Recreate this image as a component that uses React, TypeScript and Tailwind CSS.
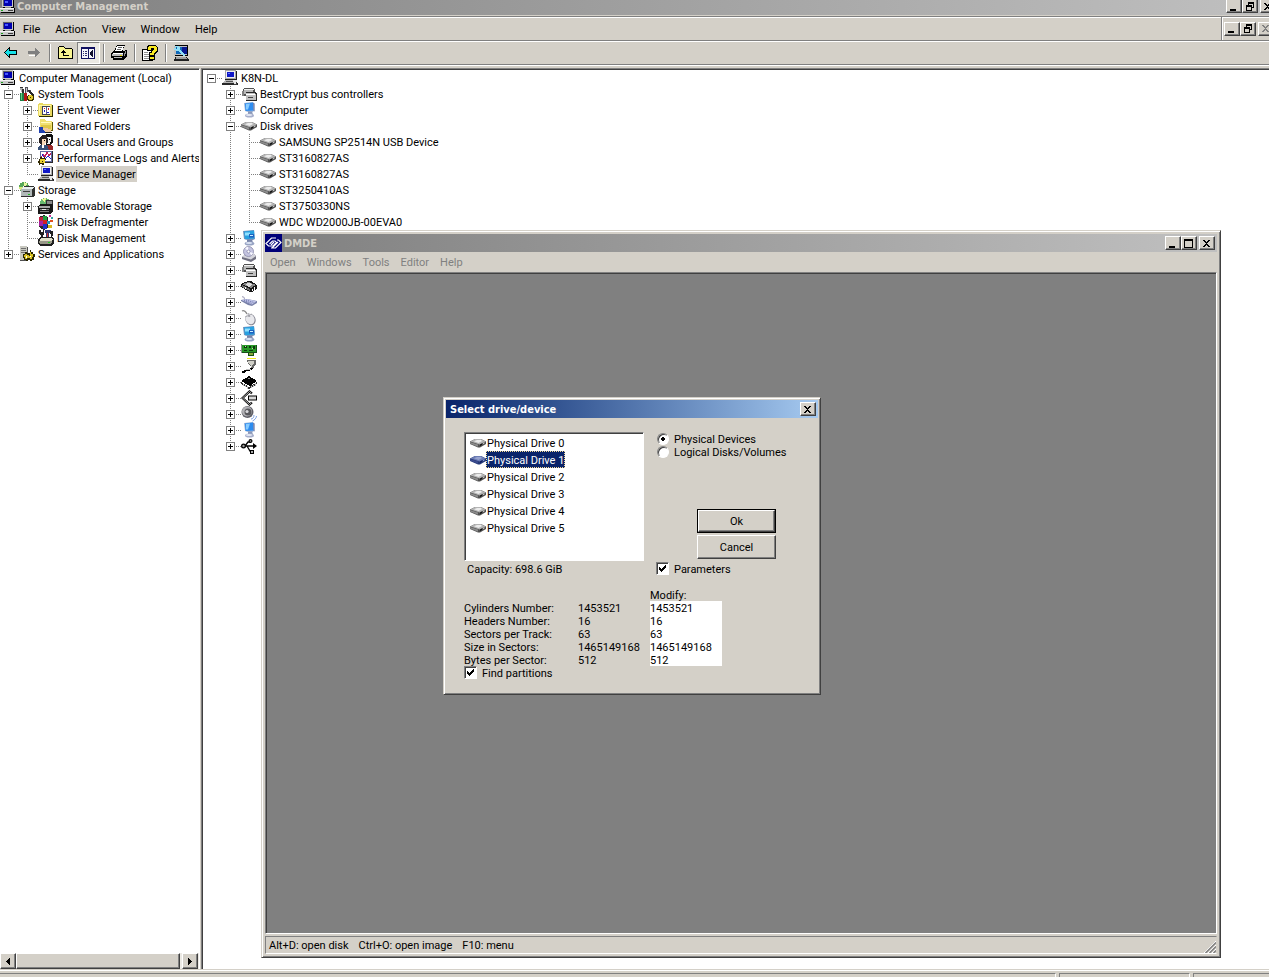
import type { ReactNode } from "react";
import clsx from "clsx";

const raised =
  "border border-t-white border-l-white border-r-[#404040] border-b-[#404040] bg-[#d4d0c8] shadow-[inset_-1px_-1px_0_#808080]";
const sunken =
  "border border-t-[#808080] border-l-[#808080] border-r-white border-b-white shadow-[inset_1px_1px_0_#404040]";
const frame =
  "border border-t-[#d4d0c8] border-l-[#d4d0c8] border-r-[#404040] border-b-[#404040] bg-[#d4d0c8] shadow-[inset_1px_1px_0_#fff,inset_-1px_-1px_0_#808080]";
const titleFont = "font-['Tahoma','DejaVu_Sans_Condensed','DejaVu_Sans',sans-serif] font-bold";
// text inside the 13px rows of the drive dialog
const compact = "pt-0.5 leading-[11px]";

/* ---------- icons ---------- */

function Icon({ children, smooth }: { children: ReactNode; smooth?: boolean }) {
  return (
    <svg
      width="16"
      height="16"
      viewBox="0 0 16 16"
      className="block shrink-0"
      shapeRendering={smooth ? "auto" : "crispEdges"}
      aria-hidden="true"
    >
      {children}
    </svg>
  );
}

const PcIcon = () => (
  <Icon>
    <path d="M3 0h10v1h1v9H3z" fill="#000" />
    <path d="M2 0h11v9H2z" fill="#c8c8c8" />
    <path d="M3 1h9v7H3z" fill="#606068" />
    <path d="M4 2h8v6H4z" fill="#0000b0" />
    <path d="M5 3h3v2H5z" fill="#4858ff" />
    <path d="M5 9h6v2H5z" fill="#909090" />
    <path d="M1 10h14v5H1z" fill="#000" />
    <path d="M0 10h14v4H0z" fill="#c8c8c8" />
    <path d="M0 10h14v1H0z" fill="#f4f4f4" />
    <path d="M8 12h5v1H8z" fill="#404040" />
    <path d="M1 12h2v1H1z" fill="#20a020" />
  </Icon>
);

const ToolsIcon = () => (
  <Icon>
    <path d="M1 2h3l1 2v2H2z" fill="#b0b0b0" />
    <path d="M1 1h3v1H1zM3 3h2v4H3z" fill="#303030" />
    <path d="M6 1h3v3h3v2H8v6H6z" fill="#505058" />
    <path d="M7 2h1v8H7z" fill="#c8c8d0" />
    <path d="M1 7h4v8H1z" fill="#208048" />
    <path d="M2 7h1v7H2z" fill="#60d080" />
    <path d="M5 7h3v8H5z" fill="#b01818" />
    <path d="M9 4h2l4 5v2h-2z" fill="#282828" />
    <path d="M9 9h5v1h1v4h-1v1H9v-1H8v-4h1z" fill="#383000" />
    <path d="M10 9h3v1h1v3h-1v1h-3v-1H9v-3h1z" fill="#e0c830" />
    <path d="M11 11h1v1h-1z" fill="#383000" />
  </Icon>
);

const EventIcon = () => (
  <Icon>
    <path d="M1 2h4l1 1h9v12H1z" fill="#303000" />
    <path d="M0 2h1V1h4v1h9v12H0z" fill="#e8d860" />
    <path d="M1 3h12v1H1zM1 3h1v10H1z" fill="#fff8a8" />
    <path d="M4 4h8v9H4z" fill="#404058" />
    <path d="M5 5h7v7H5z" fill="#fff" />
    <path d="M8 5h1v7H8z" fill="#606080" />
    <path d="M6 6h1v1H6zM10 6h1v2h-1z" fill="#d02020" />
    <path d="M6 8h1v2H6zM9 10h2v1H9z" fill="#2020c0" />
  </Icon>
);

const SharedIcon = () => (
  <Icon>
    <path d="M3 2h5l1 2h6v9H3z" fill="#605800" />
    <path d="M2 1h5l1 2h6v9H2z" fill="#f0e070" />
    <path d="M3 4h10v1H3z" fill="#fffbc0" />
    <path d="M3 7h10v4H3z" fill="#e0c848" />
    <path d="M1 9h4v3h5v3H1z" fill="#2040b0" />
    <path d="M5 10h4l4 2v2H7z" fill="#f0c8a0" />
    <path d="M7 14h7v1H7z" fill="#202020" />
  </Icon>
);

const UsersIcon = () => (
  <Icon>
    <path d="M8 0h5l2 2v6l-2 3-5 1z" fill="#101010" />
    <path d="M9 3h4v5h-1v2H9z" fill="#f0f0f0" />
    <path d="M2 3l2-2h4l2 4v4H7v3H4L1 9V5z" fill="#282020" />
    <path d="M4 5h4v4H7v2H4z" fill="#f8d8b8" />
    <path d="M6 6h1v1H6zM11 5h1v1h-1z" fill="#000" />
    <path d="M0 13l3-2h5l3 3v2H0z" fill="#385078" />
    <path d="M9 11h4l2 2v3h-4z" fill="#982828" />
    <path d="M4 11h2v3H4z" fill="#fff" />
  </Icon>
);

const PerfIcon = () => (
  <Icon>
    <path d="M3 1h12v12H3z" fill="#282828" />
    <path d="M2 1h12v11H2z" fill="#6068a0" />
    <path d="M3 2h10v9H3z" fill="#fff" />
    <path d="M3 8l2-4 2 3 2-5 2 4 2-3" fill="none" stroke="#c02060" />
    <path d="M4 4l3 5 3-3 3 3" fill="none" stroke="#2020d0" />
    <path d="M2 7h2v1h2V7h1v2h1v1H7v2h1v1H6v2H4v-1H2v1H1v-2H0v-2h1V9h1z" fill="#302800" />
    <path d="M2 9h5v4H2z" fill="#e8d030" />
    <path d="M4 11h1v1H4z" fill="#302800" />
  </Icon>
);

const DevMgrIcon = () => (
  <Icon>
    <path d="M3 0h11v1h1v9H3z" fill="#202020" />
    <path d="M3 0h11v9H3z" fill="#a8a8a8" />
    <path d="M4 1h9v7H4z" fill="#f0f0f0" />
    <path d="M5 2h7v5H5z" fill="#1018c8" />
    <path d="M6 3h2v1H6z" fill="#6070ff" />
    <path d="M3 10h10l3 4v1H0v-1z" fill="#282828" />
    <path d="M3 10h9l2 3H1z" fill="#b8b8b8" />
    <path d="M4 11h7v1H4z" fill="#585858" />
    <path d="M11 10h4v4h-3z" fill="#e8e8e8" />
    <path d="M14 12h1v3h-3v-1h2z" fill="#404040" />
  </Icon>
);

const StorageIcon = () => (
  <Icon>
    <circle cx="5" cy="5" r="5" fill="#58a858" />
    <path d="M5 5V0l4 2z" fill="#e8f8a0" />
    <path d="M5 5H0l1 3z" fill="#d8e880" />
    <circle cx="5" cy="5" r="1" fill="#fff" />
    <path d="M2 7l3-3h10l1 2v8l-2 1H2z" fill="#303030" />
    <path d="M2 7h11v7H2z" fill="#b0b8b8" />
    <path d="M2 7l3-2h10l-2 2z" fill="#e8f0f0" />
    <path d="M4 9h7v1H4z" fill="#404040" />
    <path d="M9 12h2v1H9z" fill="#20c020" />
  </Icon>
);

const RemovableIcon = () => (
  <Icon>
    <circle cx="7" cy="5" r="5" fill="#68b870" />
    <path d="M7 5l-3-4 4-1zM7 5l5 2V4z" fill="#f0f890" />
    <path d="M8 2h7v5H8z" fill="#303030" />
    <path d="M9 3h5v3H9z" fill="#888" />
    <path d="M0 8l3-2h12v7l-2 3H0z" fill="#181818" />
    <path d="M1 8h11v2H1z" fill="#a8a8a8" />
    <path d="M2 11h9v1H2zM2 13h9v1H2z" fill="#808080" />
    <path d="M4 11h4v1H4z" fill="#e8e8e8" />
  </Icon>
);

const DefragIcon = () => (
  <Icon>
    <path d="M1 3l5-2 4 2v11l-4 2-5-3z" fill="#282828" />
    <path d="M1 3h4v4H1z" fill="#c02040" />
    <path d="M5 2h4v4H5z" fill="#20a040" />
    <path d="M1 7h4v5H1z" fill="#a820a0" />
    <path d="M5 6h4v4H5z" fill="#d02020" />
    <path d="M5 10h4v5H5z" fill="#2030c8" />
    <path d="M9 7h3v3H9z" fill="#2090c0" />
    <path d="M10 11h4v3h-4z" fill="#d8b820" />
    <path d="M11 1h2v2h-2z" fill="#d030a0" />
    <path d="M13 3h2v2h-2z" fill="#30a0a0" />
    <path d="M12 6h3v2h-3z" fill="#e05020" />
  </Icon>
);

const DiskMgmtIcon = () => (
  <Icon>
    <path d="M1 0h2v2h2V0h1v4L5 5v4H3V5L1 4z" fill="#202020" />
    <path d="M7 0h6v3h-2v6H8V3H7z" fill="#303870" />
    <path d="M12 1h3v4l-1 1v3h-1V6z" fill="#202020" />
    <path d="M9 3h1v5H9z" fill="#d03020" />
    <path d="M0 9l3-2h11l2 2v5l-3 2H3l-3-2z" fill="#202020" />
    <path d="M1 10l3-2h9l2 2-2 1H3z" fill="#e0e0c8" />
    <path d="M1 11h13v2l-2 1H3l-2-1z" fill="#989888" />
    <path d="M10 12h2v1h-2z" fill="#20d020" />
  </Icon>
);

const ServicesIcon = () => (
  <Icon>
    <path d="M1 1h7l1 1v13H1z" fill="#505050" />
    <path d="M1 0h7v14H1z" fill="#c8c8c0" />
    <path d="M2 2h5v1H2zM2 4h5v1H2zM2 6h5v1H2z" fill="#707070" />
    <path d="M4 8h2V6h2v1h3V4h1v2h2v2h2v3h-1v3h-2v1h-2v-1H9v1H7v-1H5v-2H4z" fill="#282400" />
    <path d="M6 8h2v1h2v1h1V6h1v2h2v3h-1v2h-2v-1H8v1H6v-2H5V9z" fill="#d8c020" />
    <path d="M7 10h1v2H7zM11 10h1v1h-1z" fill="#fff" />
  </Icon>
);

const ControllerIcon = () => (
  <Icon>
    <path d="M3 2h9l2 2v6H2V3z" fill="#505050" />
    <path d="M3 3h9l1 1H3z" fill="#f0f0f0" />
    <path d="M3 4h9v4H3z" fill="#b8b8b8" />
    <path d="M5 6h10l1 2v6l-1 1H5z" fill="#282828" />
    <path d="M1 5h2v5H1z" fill="#808080" />
    <path d="M5 7h9l1 2v4l-1 1H5V9z" fill="#c0c0c0" />
    <path d="M5 8h9v1H5z" fill="#fff" />
    <path d="M7 11h5v1H7z" fill="#404040" />
  </Icon>
);

const MonitorIcon = () => (
  <Icon smooth>
    <path d="M3 1l9-1 1 9-3 2-6-2z" fill="#9cb4d8" />
    <path d="M4 1.500l8-1 .6 8-8 .5z" fill="#2c8cf0" />
    <path d="M5 2l4-.5-2 6H5z" fill="#88ccff" />
    <path d="M12 .4l1.600 1v8L12.600 9z" fill="#6878a8" />
    <path d="M7 9.500h4l1 3H7z" fill="#8c98b8" />
    <ellipse cx="8.500" cy="13.500" rx="4.500" ry="2" fill="#a8b0cc" />
    <ellipse cx="8" cy="13" rx="3.200" ry="1" fill="#e4e8f4" />
  </Icon>
);

const DisplayIcon = () => (
  <Icon smooth>
    <path d="M2 1l11-1 1 9-4 2-7-2z" fill="#7890b8" />
    <path d="M3 1.500l10-1 .5 8-9.500.7z" fill="#28a0e0" />
    <path d="M4 2.500h5v3H4z" fill="#90e0ff" />
    <path d="M8 4h5v3.500H8z" fill="#1c60c0" />
    <path d="M9 5h3v1H9z" fill="#c8f0ff" />
    <path d="M6 10h5l1 2.500H6z" fill="#7884a8" />
    <ellipse cx="8.500" cy="13.500" rx="4.800" ry="2" fill="#98a4c4" />
    <ellipse cx="8" cy="13" rx="3.200" ry="1" fill="#dce4f4" />
  </Icon>
);

function DiskIcon({ selected }: { selected?: boolean }) {
  return (
    <Icon smooth>
      <path d="M0 6.500L5 4h6l5 2.500V9l-6 3.500H8L0 9z" fill={selected ? "#263a78" : "#505050"} />
      <path d="M.5 6.500L5 4h6l4.500 2.500L9.500 9.500z" fill={selected ? "#6c7cb4" : "#b4b4b4"} />
      <path d="M4 6.300L7 5h4l1 1-3.500 2z" fill={selected ? "#98a4d0" : "#ececec"} />
      <path d="M0 7L8 9.500v2.300L0 8.500z" fill={selected ? "#3c4c90" : "#8c8c8c"} />
      <path d="M10 9.500l2-1V10l-2 1z" fill={selected ? "#0a1860" : "#101010"} />
      <path d="M13 8l1.500-.8v1L13 9z" fill={selected ? "#a8b8f0" : "#e8e8e8"} />
    </Icon>
  );
}

const DvdIcon = () => (
  <Icon smooth>
    <path d="M1 11l4-3h8l2 2v3l-5 3L1 13z" fill="#707080" />
    <path d="M1 11l4-3h8l2 2-5 3.500z" fill="#d4d4dc" />
    <circle cx="7.500" cy="5.500" r="5" fill="#c4c4e0" stroke="#8888a8" strokeWidth=".8" />
    <path d="M7.500 5.500L4 2l3-1.300zM7.500 5.500l4.600 1.500-1.500 2.500z" fill="#f8f8ff" />
    <circle cx="7.500" cy="5.500" r="1.500" fill="#fff" stroke="#7878a0" strokeWidth=".7" />
  </Icon>
);

const IdeIcon = () => (
  <Icon>
    <path d="M0 6l7-3h3l6 4v4l-5 3H9l-9-5z" fill="#181818" />
    <path d="M1 6l7-2 7 3-5 3z" fill="#888" />
    <path d="M4 6l4-1 4 1-4 3z" fill="#e0e0e0" />
    <path d="M1 7l8 4v2L1 9z" fill="#707070" />
    <path d="M11 11h1v2h-1zM13 9h1v3h-1zM4 9h1v2H4z" fill="#fff" />
  </Icon>
);

const KeyboardIcon = () => (
  <Icon smooth>
    <path d="M1 3c2-1 2 1 3 3" fill="none" stroke="#8888a8" />
    <path d="M0 6l6-1 10 2v2l-5 3-4-1-7-4z" fill="#7880a8" />
    <path d="M.5 6L6 5l9.500 2-4.500 3.500z" fill="#c0c4e8" />
    <path d="M3 6.500l8 3M5 6l8 2.500" stroke="#6870a8" strokeDasharray="1 1" />
  </Icon>
);

const MouseIcon = () => (
  <Icon smooth>
    <path d="M1 1c2-1 4 1 5 3" fill="none" stroke="#888" strokeWidth="1.300" />
    <ellipse cx="9.500" cy="9.500" rx="5" ry="6" transform="rotate(-25 9.500 9.500)" fill="#888894" />
    <ellipse cx="9" cy="9" rx="4.400" ry="5.400" transform="rotate(-25 9 9)" fill="#e8e8ec" />
    <path d="M4 7c2-1 5-2 7-3M7 3l2 4" fill="none" stroke="#9898a0" strokeWidth=".8" />
    <circle cx="8" cy="6" r="1" fill="#a0a0a8" />
  </Icon>
);

const NetworkCardIcon = () => (
  <Icon>
    <path d="M0 3h16v8h-3v3H7v-3H0z" fill="#185018" />
    <path d="M1 3h14v7H1z" fill="#289828" />
    <path d="M3 4h3v2H3zM8 4h2v2H8zM12 4h2v3h-2zM3 8h3v1H3zM8 8h4v1H8z" fill="#0c380c" />
    <path d="M4 4h1v1H4zM11 6h1v1h-1z" fill="#b8e8a0" />
    <path d="M8 11h4v2H8z" fill="#88a838" />
    <path d="M0 2h1v9H0z" fill="#909090" />
  </Icon>
);

const PortIcon = () => (
  <Icon>
    <path d="M6 0h9v1H6z" fill="#f0e820" />
    <path d="M6 2h9v4l-2 2v2h-3V8L7 6z" fill="#686868" />
    <path d="M7 3h6v3l-2 1v2h-1V7L7 5z" fill="#d0d0c8" />
    <path d="M11 10c-1 3-3 1-5 2s-3 3-5 2" fill="none" stroke="#000" strokeWidth="2" />
    <path d="M10 11c-1 1-3 0-5 1" fill="none" stroke="#c0c0c0" />
  </Icon>
);

const ChipIcon = () => (
  <Icon>
    <path d="M0 7l8-5 8 5-7 5z" fill="#000" />
    <path d="M0 8l8 5 8-5v2l-8 5-8-5z" fill="#303030" />
    <path d="M2 10h1v2H2zM4 11h1v2H4zM6 12h1v3H6zM10 12h1v2h-1zM12 11h1v2h-1zM14 9h1v3h-1z" fill="#c8c8c8" />
    <path d="M7 4h2v1H7z" fill="#909090" />
  </Icon>
);

const ScsiIcon = () => (
  <Icon smooth>
    <path d="M11 3.500L8.500 1.500 1.500 8l7 6.500 2.500-2" fill="none" stroke="#000" strokeWidth="2.200" />
    <path d="M10.500 3.200l-2-1.700L1.500 8l7 6.500 2-1.700" fill="none" stroke="#d0d0d0" strokeWidth=".8" />
    <path d="M7 5.500h9v5H7z" fill="#000" />
    <path d="M8 6.500h7v3H8z" fill="#d8d8d8" />
  </Icon>
);

const SoundIcon = () => (
  <Icon smooth>
    <circle cx="6.500" cy="6" r="6" fill="#606068" />
    <circle cx="6" cy="5.500" r="5" fill="#b0b0b4" />
    <circle cx="7" cy="6" r="3.500" fill="#58585c" />
    <circle cx="6" cy="5.500" r="1.600" fill="#d8d8dc" />
    <path d="M10 13c2 0 3-2 3-4M11.500 15c2-1 4-3 4-5" fill="none" stroke="#7098e0" strokeWidth=".9" />
  </Icon>
);

const UsbIcon = () => (
  <Icon smooth>
    <path d="M1 8h13M4 8l3-4h3M6 8l3 5h2" fill="none" stroke="#000" strokeWidth="1.300" />
    <circle cx="2.500" cy="8" r="2.500" fill="#000" />
    <circle cx="2.500" cy="8" r="1.200" fill="#a0a0a0" />
    <path d="M12 5l4 3-4 3z" fill="#000" />
    <circle cx="9.500" cy="3" r="2" fill="#000" />
    <circle cx="9.500" cy="3" r=".8" fill="#aaa" />
    <path d="M9 12h4v4H9z" fill="#000" />
    <path d="M10 13h2v2h-2z" fill="#aaa" />
  </Icon>
);

const BackIcon = () => (
  <Icon>
    <path d="M7 2v3h7v5H7v3H6v-1H5v-1H4v-1H3V9H2V8H1V7h1V6h1V5h1V4h1V3h1V2z" fill="#000" />
    <path d="M6 4v2h7v3H6v2H5v-1H4V9H3V8H2V7h1V6h1V5h1V4z" fill="#18e0e8" />
  </Icon>
);

const ForwardIcon = () => (
  <Icon>
    <path d="M9 3h1v1h1v1h1v1h1v1h1v1h-1v1h-1v1h-1v1h-1v1H9v-3H2V6h7z" fill="#808080" />
    <path d="M3 10h6v1H3z" fill="#fff" />
  </Icon>
);

const UpFolderIcon = () => (
  <Icon>
    <path d="M2 1h5v1h1v1h7v1h1v10H1V2h1z" fill="#000" />
    <path d="M2 2h5v1h1v1h7v9H2z" fill="#f8f490" />
    <path d="M6 5h1v1h1v1h1v1H7v2h5v1H6V8H4V7h1V6h1z" fill="#000" />
  </Icon>
);

const TreePaneIcon = () => (
  <Icon>
    <path d="M1 2h14v12H1z" fill="#101060" />
    <path d="M2 4h6v9H2zM9 4h5v9H9z" fill="#f4f4fc" />
    <path d="M3 6h1v1H3zM5 6h2v1H5zM3 8h1v1H3zM5 8h2v1H5zM3 10h1v1H3zM5 10h2v1H5z" fill="#303070" />
    <path d="M13 5v7h-1v-1h-1v-1h-1V7h1V6h1V5z" fill="#101030" />
  </Icon>
);

const PrinterIcon = () => (
  <Icon>
    <path d="M6 0h8v1h-1v2h-1v3H3V5h1V3h1V1h1z" fill="#000" />
    <path d="M6 1h7l-2 5H4z" fill="#fff" />
    <path d="M7 2h4v1H7zM6 4h4v1H6z" fill="#606060" />
    <path d="M2 6h11l2-2v1l1 1v5l-2 2v1l-2 1H2v-2H0V8h1V7h1z" fill="#000" />
    <path d="M2 8h10v1H2z" fill="#fff" />
    <path d="M1 9h11v2H1zM3 12h8v1H3z" fill="#b8b8b8" />
    <path d="M9 10h2v1H9z" fill="#e8d800" />
    <path d="M13 8h1v3h-1zM14 6h1v3h-1z" fill="#909090" />
  </Icon>
);

const HelpIcon = () => (
  <Icon>
    <path d="M0 4h11v12H0z" fill="#000" />
    <path d="M1 5h9v10H1z" fill="#fff" />
    <path d="M2 7h4v1H2zM2 9h5v1H2zM2 11h5v1H2zM2 13h5v1H2z" fill="#909090" />
    <path d="M6 0h8v1h1v1h1v5h-1v1h-1v1h-1v2H7V7h2V6H5V1h1z" fill="#000" />
    <path d="M7 1h7v1h1v4h-1v1h-1v1h-1v2H8V8h2V6h1V5h1V3H9v2H6V2h1z" fill="#f8e820" />
    <path d="M7 11h6v4H7z" fill="#000" />
    <path d="M8 12h4v2H8z" fill="#f8e820" />
  </Icon>
);

const ScanIcon = () => (
  <Icon>
    <path d="M2 0h13v11H2z" fill="#000" />
    <path d="M1 1h13v9H1z" fill="#c0c0c0" />
    <path d="M3 2h11v7H3z" fill="#1068b8" />
    <path d="M9 2h5v7H9z" fill="#081890" />
    <path d="M2 1h4v1h1v3h1v1h1v1h1v1h1v1h1v2h-2v-1H9V9H8V8H7V7H6V6H3V5H1V3h2v1h1V2H2z" fill="#90e0f8" />
    <path d="M2 12h12l2 3v1H1z" fill="#202020" />
    <path d="M3 12h10l1 2H3z" fill="#a0a0a0" />
  </Icon>
);

const DmdeIcon = () => (
  <svg width="18" height="18" viewBox="0 0 18 18" className="block shrink-0" aria-hidden="true">
    <path d="M0 0h17v18H0z" fill="#000078" />
    <g fill="none" stroke="#fff" strokeWidth="1.200">
      <path d="M11 4H6.500L1 9.500 3.500 12H8l3.500-3.500L10 7H7.500L4.500 10" />
      <path d="M6 14h4.500L16 8.500 13.500 6H12M6 11l3-3M7 14l6-6" />
    </g>
  </svg>
);

/* ---------- window chrome ---------- */

const glyphs = {
  min: "M2 8h6v2H2z",
  max: "M1 1h9v9H1zM2 3v6h7V3z",
  restore: "M4 1h6v6H8v3H2V4h2zM5 3v1h3v2h1V3zM3 6v3h4V6z",
  close: "M2 2h2v1h1v1h1V3h1V2h2v1H8v1H7v1H6v1h1v1h1v1h1v1H7V8H6V7H5v1H4v1H2V8h1V7h1V6h1V5H4V4H3V3H2z",
};

function WinButton({ kind, label, dim }: { kind: keyof typeof glyphs; label: string; dim?: boolean }) {
  return (
    <button aria-label={label} className={clsx("flex h-3.5 w-4 shrink-0 items-center pl-px", raised)}>
      <svg width="11" height="11" viewBox="0 0 11 11" shapeRendering="crispEdges" className="shrink-0" aria-hidden="true">
        <path fillRule="evenodd" d={glyphs[kind]} fill={dim ? "#808080" : "#000"} />
      </svg>
    </button>
  );
}

/* ---------- tree ---------- */

type Gutter = "none" | "line" | "tee" | "end" | "plus" | "minus" | "plusEnd" | "root";

const lineSpans: Record<Gutter, string> = {
  none: "",
  line: "M8.500 0v16",
  tee: "M8.500 0v16M8 8.500h11",
  end: "M8.500 0v9M8 8.500h11",
  plus: "M8.500 0v16M8 8.500h11",
  minus: "M8.500 0v16M8 8.500h11",
  plusEnd: "M8.500 0v9M8 8.500h11",
  root: "M8 8.500h11",
};

function GutterCell({ kind }: { kind: Gutter }) {
  const isOpen = kind === "minus" || kind === "root";
  const isClosed = kind === "plus" || kind === "plusEnd";
  return (
    <svg width="19" height="16" viewBox="0 0 19 16" shapeRendering="crispEdges" className="block shrink-0" aria-hidden="true">
      <path d={lineSpans[kind]} stroke="#808080" strokeDasharray="1 1" fill="none" />
      {(isOpen || isClosed) && (
        <>
          <path d="M4.500 4.500h8v8h-8z" fill="#fff" stroke="#808080" />
          <path d={isOpen ? "M6 8.500h5" : "M6 8.500h5M8.500 6v5"} stroke="#000" />
        </>
      )}
    </svg>
  );
}

type Row = { gutters: Gutter[]; icon: ReactNode; label?: string; selected?: boolean };

const consoleRows: Row[] = [
  { gutters: [], icon: <PcIcon />, label: "Computer Management (Local)" },
  { gutters: ["minus"], icon: <ToolsIcon />, label: "System Tools" },
  { gutters: ["line", "plus"], icon: <EventIcon />, label: "Event Viewer" },
  { gutters: ["line", "plus"], icon: <SharedIcon />, label: "Shared Folders" },
  { gutters: ["line", "plus"], icon: <UsersIcon />, label: "Local Users and Groups" },
  { gutters: ["line", "plus"], icon: <PerfIcon />, label: "Performance Logs and Alerts" },
  { gutters: ["line", "end"], icon: <DevMgrIcon />, label: "Device Manager", selected: true },
  { gutters: ["minus"], icon: <StorageIcon />, label: "Storage" },
  { gutters: ["line", "plus"], icon: <RemovableIcon />, label: "Removable Storage" },
  { gutters: ["line", "tee"], icon: <DefragIcon />, label: "Disk Defragmenter" },
  { gutters: ["line", "end"], icon: <DiskMgmtIcon />, label: "Disk Management" },
  { gutters: ["plusEnd"], icon: <ServicesIcon />, label: "Services and Applications" },
];

const deviceRows: Row[] = [
  { gutters: ["root"], icon: <DevMgrIcon />, label: "K8N-DL" },
  { gutters: ["none", "plus"], icon: <ControllerIcon />, label: "BestCrypt bus controllers" },
  { gutters: ["none", "plus"], icon: <MonitorIcon />, label: "Computer" },
  { gutters: ["none", "minus"], icon: <DiskIcon />, label: "Disk drives" },
  { gutters: ["none", "line", "tee"], icon: <DiskIcon />, label: "SAMSUNG SP2514N USB Device" },
  { gutters: ["none", "line", "tee"], icon: <DiskIcon />, label: "ST3160827AS" },
  { gutters: ["none", "line", "tee"], icon: <DiskIcon />, label: "ST3160827AS" },
  { gutters: ["none", "line", "tee"], icon: <DiskIcon />, label: "ST3250410AS" },
  { gutters: ["none", "line", "tee"], icon: <DiskIcon />, label: "ST3750330NS" },
  { gutters: ["none", "line", "end"], icon: <DiskIcon />, label: "WDC WD2000JB-00EVA0" },
  { gutters: ["none", "plus"], icon: <DisplayIcon /> },
  { gutters: ["none", "plus"], icon: <DvdIcon /> },
  { gutters: ["none", "plus"], icon: <ControllerIcon /> },
  { gutters: ["none", "plus"], icon: <IdeIcon /> },
  { gutters: ["none", "plus"], icon: <KeyboardIcon /> },
  { gutters: ["none", "plus"], icon: <MouseIcon /> },
  { gutters: ["none", "plus"], icon: <DisplayIcon /> },
  { gutters: ["none", "plus"], icon: <NetworkCardIcon /> },
  { gutters: ["none", "plus"], icon: <PortIcon /> },
  { gutters: ["none", "plus"], icon: <ChipIcon /> },
  { gutters: ["none", "plus"], icon: <ScsiIcon /> },
  { gutters: ["none", "plus"], icon: <SoundIcon /> },
  { gutters: ["none", "plus"], icon: <MonitorIcon /> },
  { gutters: ["none", "plusEnd"], icon: <UsbIcon /> },
];

function Tree({ rows, label }: { rows: Row[]; label: string }) {
  return (
    <ul role="tree" aria-label={label} className="pt-px">
      {rows.map((row, i) => (
        <li key={i} role="treeitem" aria-selected={!!row.selected} className="flex h-4 items-center whitespace-nowrap">
          {row.gutters.map((g, j) => (
            <GutterCell key={j} kind={g} />
          ))}
          {row.icon}
          {row.label && (
            <span className={clsx("ml-0.5 px-px pt-px leading-[15px]", row.selected && "bg-[#d4d0c8]")}>{row.label}</span>
          )}
        </li>
      ))}
    </ul>
  );
}

/* ---------- main window ---------- */

function ToolButton({ label, pressed, children }: { label: string; pressed?: boolean; children: ReactNode }) {
  return (
    <button
      aria-label={label}
      className={clsx(
        "flex h-[22px] w-[23px] items-center border pl-0.5",
        pressed ? "border-t-[#808080] border-l-[#808080] border-r-white border-b-white bg-[#ebe9e4]" : "border-transparent",
      )}
    >
      {children}
    </button>
  );
}

const ToolSeparator = () => (
  <div className="flex w-2 justify-center py-0.5">
    <div className="h-[18px] w-0.5 border-l border-r border-l-[#808080] border-r-white" />
  </div>
);

function Scrollbar() {
  return (
    <div className="flex h-4 w-full bg-[#ebe9e4] pr-px">
      <button aria-label="Scroll left" className={clsx("flex w-4 items-center justify-center", raised)}>
        <svg width="4" height="7" viewBox="0 0 4 7" shapeRendering="crispEdges" aria-hidden="true">
          <path d="M3 0h1v7H3V6H2V5H1V4H0V3h1V2h1V1h1z" />
        </svg>
      </button>
      <div className={clsx("mr-0.5 flex-1", raised)} />
      <button aria-label="Scroll right" className={clsx("flex w-4 items-center justify-center", raised)}>
        <svg width="4" height="7" viewBox="0 0 4 7" shapeRendering="crispEdges" aria-hidden="true">
          <path d="M0 0h1v1h1v1h1v1h1v1H3v1H2v1H1v1H0z" />
        </svg>
      </button>
    </div>
  );
}

/* ---------- drive dialog ---------- */

const drives = [0, 1, 2, 3, 4, 5].map((n) => `Physical Drive ${n}`);

const params = [
  { id: "cylinders", label: "Cylinders Number:", value: "1453521" },
  { id: "headers", label: "Headers Number:", value: "16" },
  { id: "track", label: "Sectors per Track:", value: "63" },
  { id: "sectors", label: "Size in Sectors:", value: "1465149168" },
  { id: "bytes", label: "Bytes per Sector:", value: "512" },
];

function Check({ label }: { label: string }) {
  return (
    <label className="flex h-[13px] items-center gap-[5px]">
      <span className="relative block size-[13px]">
        <input type="checkbox" defaultChecked className={clsx("peer block size-[13px] appearance-none bg-white", sunken)} />
        <svg
          width="7"
          height="7"
          viewBox="0 0 7 7"
          shapeRendering="crispEdges"
          className="pointer-events-none absolute top-[3px] left-[3px] hidden peer-checked:block"
          aria-hidden="true"
        >
          <path d="M0 2h1v1h1v1h1V3h1V2h1V1h1V0h1v3H6v1H5v1H4v1H3v1H2V6H1V5H0z" />
        </svg>
      </span>
      <span className={compact}>{label}</span>
    </label>
  );
}

function Radio({ label, checked }: { label: string; checked?: boolean }) {
  return (
    <label className="flex h-[13px] items-center gap-[5px] pl-px">
      <input
        type="radio"
        name="source"
        defaultChecked={checked}
        className="block size-3 appearance-none rounded-full border border-t-[#808080] border-r-white border-b-white border-l-[#808080] bg-white shadow-[inset_1px_1px_0_#404040] checked:bg-[radial-gradient(circle,#000_2px,#fff_2px)]"
      />
      <span className={compact}>{label}</span>
    </label>
  );
}

function DriveDialog() {
  return (
    <form
      role="dialog"
      aria-label="Select drive/device"
      onSubmit={(e) => e.preventDefault()}
      className={clsx("absolute top-[124px] left-[177px] w-[378px] p-0.5", frame)}
    >
      <div className="flex h-[18px] items-center justify-between bg-linear-to-r from-[#0a246a] to-[#a6caf0] pr-0.5 pl-1">
        <h2 className={clsx("text-white", titleFont)}>Select drive/device</h2>
        <WinButton kind="close" label="Close dialog" />
      </div>
      <div className="px-[18px] pt-3.5 pb-[13px]">
        <div className="flex gap-3">
          <div>
            <ul role="listbox" aria-label="Drives" className={clsx("h-[129px] w-[180px] bg-white p-px pl-[5px]", sunken)}>
              {drives.map((drive, i) => (
                <li key={drive} role="option" aria-selected={i === 1} className="flex h-[17px] items-center">
                  <DiskIcon selected={i === 1} />
                  <span
                    className={clsx(
                      "px-px pt-0.5 leading-[15px]",
                      i === 1 && "bg-[#0a246a] text-white outline-1 -outline-offset-1 outline-dotted outline-[#f5db95]",
                    )}
                  >
                    {drive}
                  </span>
                </li>
              ))}
            </ul>
            <p className="mt-0.5 pl-[3px]">Capacity: 698.6 GiB</p>
          </div>
          <div className="flex flex-col justify-between pb-px">
            <div>
              <Radio label="Physical Devices" checked />
              <Radio label="Logical Disks/Volumes" />
            </div>
            <div>
              <div className="mb-[3px] ml-[41px] flex w-[79px] flex-col gap-0.5">
                <div className="border border-black">
                  <button type="submit" className={clsx("block h-[22px] w-full", raised)}>
                    Ok
                  </button>
                </div>
                <button type="button" className={clsx("block h-6 w-full", raised)}>
                  Cancel
                </button>
              </div>
              <Check label="Parameters" />
            </div>
          </div>
        </div>
        <table className="mt-3 table-fixed border-collapse text-left">
          <thead>
            <tr className="h-[13px]">
              <td className="w-[114px] p-0" />
              <td className="w-[72px] p-0" />
              <th className={clsx("w-[72px] px-0 pb-0 font-normal", compact)}>Modify:</th>
            </tr>
          </thead>
          <tbody>
            {params.map((p) => (
              <tr key={p.id} className="h-[13px]">
                <th className={clsx("px-0 pb-0 font-normal", compact)}>
                  <label htmlFor={p.id} className="block">
                    {p.label}
                  </label>
                </th>
                <td className={clsx("px-0 pb-0", compact)}>{p.value}</td>
                <td className="p-0">
                  <input id={p.id} defaultValue={p.value} className={clsx("block h-[13px] w-full bg-white px-0 pb-0", compact)} />
                </td>
              </tr>
            ))}
          </tbody>
        </table>
        <Check label="Find partitions" />
      </div>
    </form>
  );
}

function DmdeWindow() {
  return (
    <section className={clsx("absolute top-[230px] right-12 bottom-[19px] left-[261px] flex flex-col p-[3px]", frame)}>
      <div className="flex h-[18px] items-center bg-linear-to-r from-[#808080] to-[#c0c0c0] pr-0.5">
        <DmdeIcon />
        <h2 className={clsx("flex-1 pl-px text-[#d4d0c8]", titleFont)}>DMDE</h2>
        <WinButton kind="min" label="Minimize DMDE" />
        <WinButton kind="max" label="Maximize DMDE" />
        <span className="w-0.5" />
        <WinButton kind="close" label="Close DMDE" />
      </div>
      <nav className="flex h-5 items-center gap-[11px] pl-[5px] text-[#808080]">
        {["Open", "Windows", "Tools", "Editor", "Help"].map((item) => (
          <button key={item}>{item}</button>
        ))}
      </nav>
      <div className={clsx("relative flex-1 bg-[#808080]", sunken)}>
        <DriveDialog />
      </div>
      <div className="mt-0.5 flex h-[18px] items-center border border-t-[#808080] border-r-[#d4d0c8] border-b-white border-l-[#808080] pl-[3px]">
        <p className="flex flex-1 gap-2.5">
          <span>Alt+D: open disk</span>
          <span>Ctrl+O: open image</span>
          <span>F10: menu</span>
        </p>
        <svg width="12" height="12" viewBox="0 0 12 12" className="self-end" aria-hidden="true">
          <path d="M0 12L12 0M4 12l8-8M8 12l4-4" stroke="#fff" />
          <path d="M1.500 12L12 1.500M5.500 12L12 5.500M9.500 12L12 9.500" stroke="#808080" strokeWidth="1.500" />
        </svg>
      </div>
    </section>
  );
}

export default function App() {
  return (
    <div className="relative flex h-screen flex-col overflow-hidden bg-[#d4d0c8] font-['Tahoma','Roboto',sans-serif] text-[11px] leading-[13px] text-black">
      <header className="flex h-[15px] items-center overflow-hidden bg-linear-to-r from-[#808080] to-[#c0c0c0] pb-[3px]">
        <PcIcon />
        <h1 className={clsx("flex-1 pl-px text-[#d4d0c8]", titleFont)}>Computer Management</h1>
        <WinButton kind="min" label="Minimize" />
        <WinButton kind="restore" label="Restore" />
        <div className="-mr-[7px] ml-0.5">
          <WinButton kind="close" label="Close" />
        </div>
      </header>

      <div className="mt-px flex h-[25px] border-t border-b border-[#808080] shadow-[inset_0_1px_0_#fff]">
        <nav className="flex flex-1 items-center gap-[7px] pt-px">
          <PcIcon />
          <div className="flex gap-[15px]">
            {["File", "Action", "View", "Window", "Help"].map((item) => (
              <button key={item}>{item}</button>
            ))}
          </div>
        </nav>
        <div className="-mr-[5px] flex items-center border-l border-[#808080] pl-0.5 shadow-[inset_1px_0_0_#fff]">
          <WinButton kind="min" label="Minimize child" />
          <WinButton kind="restore" label="Restore child" />
          <span className="w-0.5" />
          <WinButton kind="close" label="Close child" dim />
        </div>
      </div>

      <div className="flex h-6 border-t border-b border-t-white border-b-[#808080] shadow-[0_1px_0_#fff]">
        <ToolButton label="Back">
          <BackIcon />
        </ToolButton>
        <ToolButton label="Forward">
          <ForwardIcon />
        </ToolButton>
        <ToolSeparator />
        <ToolButton label="Up one level">
          <UpFolderIcon />
        </ToolButton>
        <ToolButton label="Show or hide console tree" pressed>
          <TreePaneIcon />
        </ToolButton>
        <ToolSeparator />
        <ToolButton label="Print">
          <PrinterIcon />
        </ToolButton>
        <ToolSeparator />
        <ToolButton label="Help">
          <HelpIcon />
        </ToolButton>
        <ToolSeparator />
        <ToolButton label="Scan for hardware changes">
          <ScanIcon />
        </ToolButton>
      </div>

      <main className="mt-[3px] mb-px flex min-h-0 flex-1 gap-px">
        <aside className="flex w-[200px] shrink-0 flex-col border-t border-r border-t-[#808080] border-r-white bg-white shadow-[inset_0_1px_0_#404040]">
          <div className="flex-1 overflow-hidden">
            <Tree rows={consoleRows} label="Console tree" />
          </div>
          <Scrollbar />
        </aside>
        <section className="flex-1 border-t border-l border-[#808080] bg-white pl-px shadow-[inset_1px_1px_0_#404040]">
          <Tree rows={deviceRows} label="Devices" />
        </section>
      </main>

      <footer className="flex h-[7px] gap-[3px] border-t border-white pt-0.5">
        <div className="flex-1 border-t border-r border-t-[#808080] border-r-white" />
        <div className="w-[131px] border-t border-r border-l border-t-[#808080] border-r-white border-l-[#808080]" />
        <div className="w-[76px] border-t border-l border-[#808080]" />
      </footer>

      <DmdeWindow />
    </div>
  );
}
